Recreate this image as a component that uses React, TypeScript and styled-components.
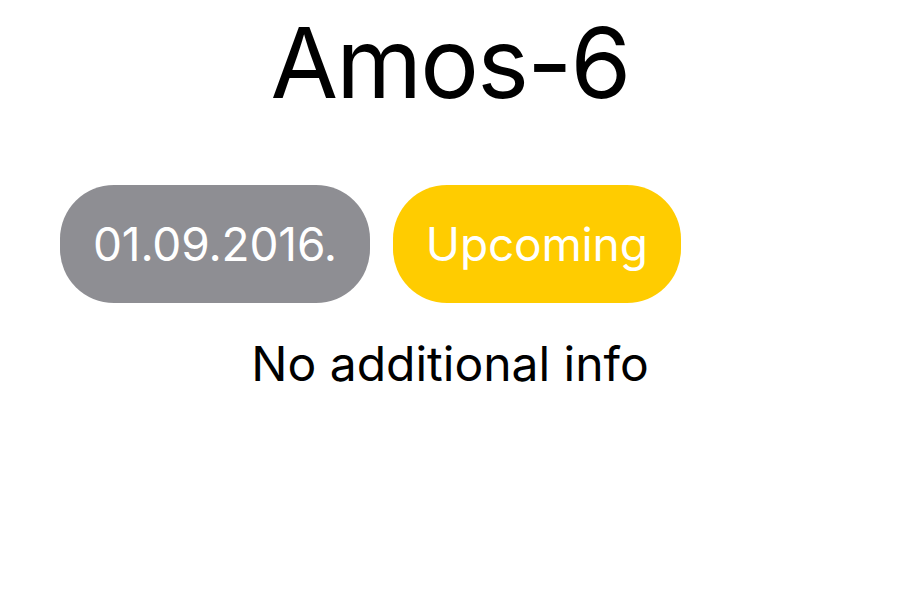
import React from "react";
import styled, { createGlobalStyle } from "styled-components";

const Global = createGlobalStyle`
  html, body { margin: 0; padding: 0; background: #ffffff; }
  body { font-family: Inter, "Noto Sans", "Liberation Sans", sans-serif; color: #000; }
`;

const Page = styled.div`
  width: 900px;
  height: 600px;
  display: flex;
  flex-direction: column;
  align-items: stretch;
`;

const Title = styled.h1`
  margin: 4px 0 0;
  font-size: 98px;
  font-weight: 400;
  line-height: 118px;
  text-align: center;
  letter-spacing: -1.8px;
`;

const BadgeRow = styled.div`
  display: flex;
  gap: 23px;
  padding-left: 60px;
  margin-top: 63px;
`;

const Badge = styled.div<{ $tone: "gray" | "yellow" }>`
  height: 118px;
  padding: 0 33px;
  box-sizing: border-box;
  display: flex;
  align-items: center;
  border-radius: 54px;
  background: ${(p) => (p.$tone === "gray" ? "#8e8e93" : "#ffcc00")};
  color: #ffffff;
  font-size: 46px;
  font-weight: 400;
  letter-spacing: -0.15px;
`;

const Info = styled.p`
  margin: 32px 0 0;
  text-align: center;
  font-size: 48px;
  line-height: 58px;
`;

export default function App() {
  return (
    <>
      <Global />
      <Page>
        <Title>Amos-6</Title>
        <BadgeRow>
          <Badge $tone="gray">01.09.2016.</Badge>
          <Badge $tone="yellow">Upcoming</Badge>
        </BadgeRow>
        <Info>No additional info</Info>
      </Page>
    </>
  );
}
